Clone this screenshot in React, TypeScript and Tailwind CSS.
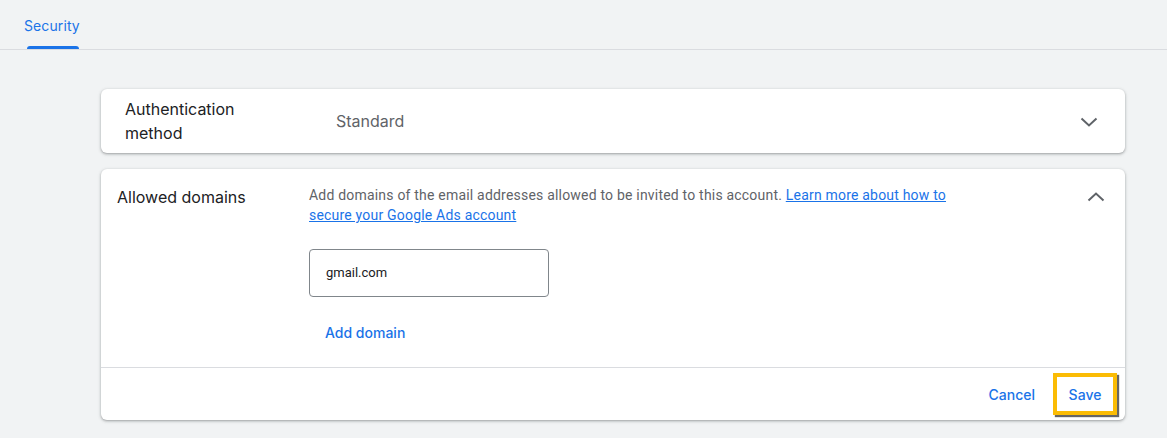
import React from "react";

const Chevron = ({ up = false }: { up?: boolean }) => (
  <svg width="18" height="12" viewBox="0 0 18 12" className="block">
    <path
      d={up ? "M1.5 9.5 9 2.5l7.5 7" : "M1.5 2.5 9 9.5l7.5-7"}
      fill="none"
      stroke="#5f6368"
      strokeWidth="2"
    />
  </svg>
);

const gs = { fontFamily: "Inter, Roboto, sans-serif" };

export default function App() {
  return (
    <div className="min-h-[438px] w-full bg-[#f1f3f4]" style={{ fontFamily: "Roboto, 'Liberation Sans', sans-serif" }}>
      <div className="h-[50px] border-b border-[#dadce0] flex items-end">
        <div className="ml-[24px] flex flex-col items-center">
          <span className="text-[14px] leading-[20px] text-[#1a73e8] mb-[10px] tracking-[0.1px]" style={gs}>Security</span>
          <div className="h-[3px] w-[52px] ml-[2px] bg-[#1a73e8] rounded-t-[3px]" />
        </div>
      </div>

      <div className="pl-[101px] pr-[42px] pt-[39px]">
        <div className="bg-white rounded-[6px] shadow-[0_1px_2px_rgba(60,64,67,0.3),0_1px_3px_1px_rgba(60,64,67,0.15)] h-[64px] flex items-center pl-[24px] pr-[27px]">
          <div className="w-[211px] text-[16px] leading-[24px] text-[#202124]" style={gs}>
            Authentication<br />method
          </div>
          <div className="flex-1 text-[16px] text-[#5f6368]" style={gs}>Standard</div>
          <div className="pt-[2px]">
            <Chevron />
          </div>
        </div>

        <div className="mt-[16px] bg-white rounded-[6px] shadow-[0_1px_2px_rgba(60,64,67,0.3),0_1px_3px_1px_rgba(60,64,67,0.15)]">
          <div className="flex pl-[16px] pr-[20px] pt-[16px] pb-[24px]">
            <div className="w-[192px] pt-[0px] text-[16px] leading-[24px] text-[#202124]" style={gs}>
              Allowed domains
            </div>
            <div className="flex-1">
              <p className="w-[660px] text-[14px] leading-[20px] text-[#5f6368] tracking-[0.2px]">
                Add domains of the email addresses allowed to be invited to this account.{" "}
                <a className="text-[#1a73e8] underline">Learn more about how to secure your Google Ads account</a>
              </p>
              <div className="mt-[24px] w-[240px] h-[48px] border border-[#80868b] rounded-[4px] flex items-center px-[16px] text-[13px] text-[#202124]">
                gmail.com
              </div>
              <div className="mt-[26px] ml-[16px] text-[14px] leading-[20px] font-medium text-[#1a73e8]" style={gs}>
                Add domain
              </div>
            </div>
            <div className="pt-[6px]">
              <Chevron up />
            </div>
          </div>
          <div className="border-t border-[#dadce0] h-[53px] flex items-center justify-end pr-[8px]">
            <span className="text-[14px] font-medium text-[#1a73e8] mr-[18px]" style={gs}>Cancel</span>
            <span className="w-[64px] h-[42px] border-[4px] border-[#fbbc04] shadow-[2px_2px_1px_rgba(0,0,0,0.6)] flex items-center justify-center text-[14px] font-medium text-[#1a73e8]" style={gs}>
              Save
            </span>
          </div>
        </div>
      </div>
    </div>
  );
}
